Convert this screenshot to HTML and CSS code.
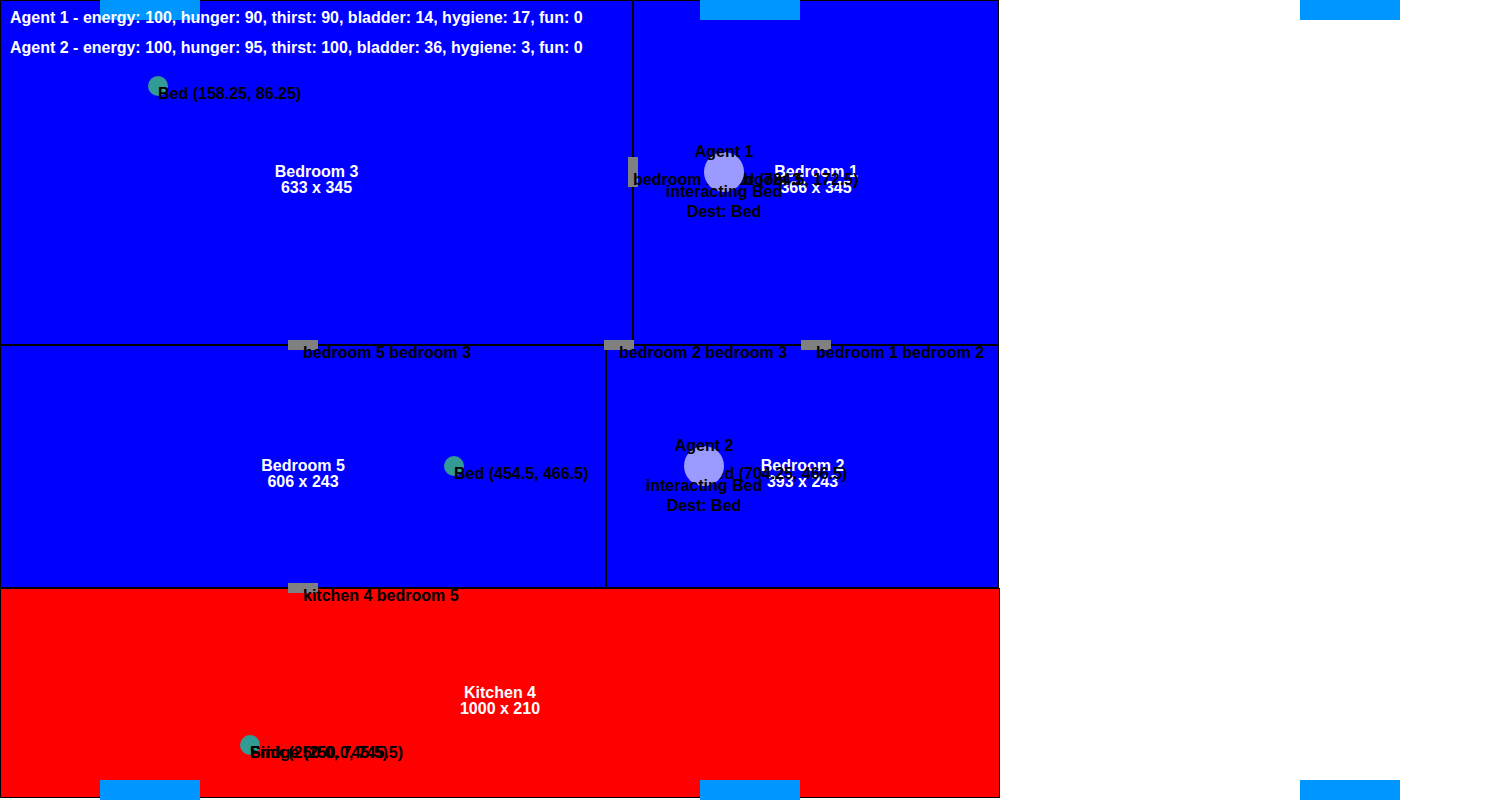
FILE: index.html
```html
<!DOCTYPE html>
<html lang="en">
<head>
<meta charset="utf-8">
<title>House simulation</title>
<link rel="stylesheet" href="styles.css">
</head>
<body>
<main class="world">
  <div class="floor">
    <div class="row row-top">
      <section class="room bedroom bedroom-3"><h2>Bedroom 3</h2><p>633 x 345</p></section>
      <section class="room bedroom bedroom-1"><h2>Bedroom 1</h2><p>366 x 345</p></section>
    </div>
    <div class="row row-middle">
      <section class="room bedroom bedroom-5"><h2>Bedroom 5</h2><p>606 x 243</p></section>
      <section class="room bedroom bedroom-2"><h2>Bedroom 2</h2><p>393 x 243</p></section>
    </div>
    <section class="room kitchen"><h2>Kitchen 4</h2><p>1000 x 210</p></section>
  </div>

  <div class="windows windows-top"><i></i><i></i><i></i></div>
  <div class="windows windows-bottom"><i></i><i></i><i></i></div>

  <div class="pin at-door-53"><i class="door"></i><span class="label">bedroom 5 bedroom 3</span></div>
  <div class="pin at-door-23"><i class="door"></i><span class="label">bedroom 2 bedroom 3</span></div>
  <div class="pin at-door-12"><i class="door"></i><span class="label">bedroom 1 bedroom 2</span></div>
  <div class="pin at-door-13"><i class="door door-upright"></i><span class="label">bedroom 1 bedroom 3</span></div>
  <div class="pin at-door-45"><i class="door"></i><span class="label">kitchen 4 bedroom 5</span></div>

  <div class="pin at-bed-3"><i class="object"></i><span class="label">Bed (158.25, 86.25)</span></div>
  <div class="pin at-bed-1"><i class="object"></i><span class="label">Bed (724.5, 172.5)</span></div>
  <div class="pin at-bed-5"><i class="object"></i><span class="label">Bed (454.5, 466.5)</span></div>
  <div class="pin at-bed-2"><i class="object"></i><span class="label">Bed (704.25, 466.5)</span></div>
  <div class="pin at-sink"><i class="object"></i><span class="label">Sink (250.0, 745.5)</span></div>
  <div class="pin at-sink"><span class="label">Fridge (250.0, 745.5)</span></div>

  <div class="pin at-bed-1"><i class="agent"></i><div class="agent-text"><b>Agent 1</b><span>interacting Bed</span><span>Dest: Bed</span></div></div>
  <div class="pin at-bed-2"><i class="agent"></i><div class="agent-text"><b>Agent 2</b><span>interacting Bed</span><span>Dest: Bed</span></div></div>

  <div class="status">
    <p>Agent 1 - energy: 100, hunger: 90, thirst: 90, bladder: 14, hygiene: 17, fun: 0</p>
    <p>Agent 2 - energy: 100, hunger: 95, thirst: 100, bladder: 36, hygiene: 3, fun: 0</p>
  </div>
</main>
</body>
</html>
```
FILE: styles.css
```css
* { box-sizing: border-box; }
body {
  margin: 0;
  background: #fff;
  color: #000;
  font: bold 16px/16px "Liberation Sans", Arial, sans-serif;
}
h2, p { margin: 0; font: inherit; }

.world { position: relative; min-height: 100vh; overflow: hidden; }

/* Floor plan */
.floor { width: max-content; }
.row { display: flex; }
.room {
  display: flex;
  flex-direction: column;
  align-items: center;
  justify-content: center;
  padding-top: 15px;
  border: 1px solid #000;
  color: #fff;
}
.bedroom { background: #00f; }
.kitchen { width: 1000px; height: 210px; background: #f00; }
.row-top { height: 345px; }
.row-middle { height: 243px; }
.bedroom-3 { width: 633px; }
.bedroom-1 { width: 366px; }
.bedroom-5 { width: 606px; }
.bedroom-2 { width: 393px; }

/* Light strips along the outer edges */
.windows { position: absolute; left: 100px; display: flex; gap: 500px; }
.windows i { width: 100px; height: 20px; background: #0096ff; }
.windows-top { top: 0; }
.windows-bottom { bottom: 0; }

/* Zero-size anchors at map coordinates */
.pin { position: absolute; width: 0; height: 0; white-space: nowrap; }
.at-door-53 { left: 303px; top: 345px; }
.at-door-23 { left: 619px; top: 345px; }
.at-door-12 { left: 816px; top: 345px; }
.at-door-13 { left: 633px; top: 172px; }
.at-door-45 { left: 303px; top: 588px; }
.at-bed-3 { left: 158px; top: 86px; }
.at-bed-1 { left: 724px; top: 172px; }
.at-bed-5 { left: 454px; top: 466px; }
.at-bed-2 { left: 704px; top: 466px; }
.at-sink { left: 250px; top: 745px; }

.pin i { position: absolute; }
.door { left: -15px; top: -5px; width: 30px; height: 10px; background: #808080; }
.door-upright { left: -5px; top: -15px; width: 10px; height: 30px; }
.object { left: -10px; top: -10px; width: 20px; height: 20px; border-radius: 50%; background: #329b96; }
.agent { left: -20px; top: -20px; width: 40px; height: 40px; border-radius: 50%; background: #9b9bff; }
.label { position: absolute; left: 0; top: 0; }
.agent-text {
  position: absolute;
  top: -28px;
  left: -80px;
  width: 160px;
  display: flex;
  flex-direction: column;
  align-items: center;
  gap: 4px;
}
.agent-text b { margin-bottom: 20px; }

.status {
  position: absolute;
  top: 10px;
  left: 10px;
  display: flex;
  flex-direction: column;
  gap: 14px;
  color: #fff;
  white-space: nowrap;
}
```
